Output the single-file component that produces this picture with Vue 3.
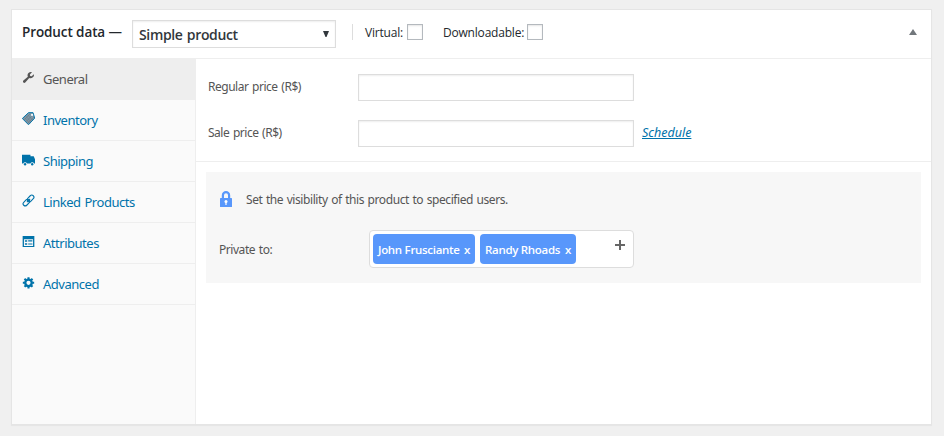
<script setup>
import { ref } from 'vue'

const active = ref('general')
const tabs = [
  { id: 'general', label: 'General' },
  { id: 'inventory', label: 'Inventory' },
  { id: 'shipping', label: 'Shipping' },
  { id: 'linked', label: 'Linked Products' },
  { id: 'attributes', label: 'Attributes' },
  { id: 'advanced', label: 'Advanced' },
]
const users = ref(['John Frusciante', 'Randy Rhoads'])
const remove = (name) => { users.value = users.value.filter((u) => u !== name) }
</script>

<template>
  <div class="page">
    <section class="postbox">
      <header class="head">
        <span class="title">Product data —</span>
        <div class="select">
          <span class="select-text">Simple product</span>
          <svg class="caret" width="6" height="6" viewBox="0 0 6 6"><path d="M0 0h6L3.5 6h-1z" fill="#32373c" /></svg>
        </div>
        <i class="divider"></i>
        <label class="check virtual"><span>Virtual:</span><input type="checkbox" /></label>
        <label class="check download"><span>Downloadable:</span><input type="checkbox" /></label>
        <svg class="toggle" width="8" height="6" viewBox="0 0 8 6"><path d="M4 0l4 6H0z" fill="#72777c" /></svg>
      </header>

      <div class="body">
        <nav class="tabs">
          <a v-for="t in tabs" :key="t.id" :class="['tab', t.id, { active: active === t.id }]" @click="active = t.id">
            <svg class="icon" width="13" height="13" viewBox="0 0 20 20" fill="currentColor">
              <path v-if="t.id === 'general'" d="M16.7 9.8c-1.7 1.6-3.9 1.9-5.6 1L5 17.7c-.8.8-2.1.8-2.9 0-.8-.8-.8-2.1 0-2.9L9 8.8C8.1 7 8.5 4.8 10 3.2c1.5-1.5 3.6-1.9 5.3-1.2l-3.2 3.3.5 2.2 2.3.6 3.2-3.2c.8 1.7 0 3.5-1.4 4.9z" />
              <g v-else-if="t.id === 'inventory'">
                <path d="M10 1h7l2.5 8.5L10 19.500 .5 10z" fill="#7d99aa" stroke="currentColor" stroke-width="1.5" />
                <path d="M5.500 6l8.500 9M8 4l8.500 8.500M3.500 8.500l8.500 9M3.500 12L13 2.500M6 15l10-10M8.500 17.500L18.500 7.500" fill="none" stroke="#666f78" stroke-width=".7" />
                <circle cx="15.5" cy="4.5" r="1.7" fill="#fafafa" />
              </g>
              <g v-else-if="t.id === 'shipping'">
                <path d="M0 2.500h13v2.500h5l2 4.500V16h-1.500a3 3 0 0 0-5.500 0H7.500A3 3 0 0 0 2 16H0z" />
                <circle cx="4.700" cy="17.300" r="1.800" /><circle cx="15.700" cy="17.300" r="1.800" />
              </g>
              <g v-else-if="t.id === 'linked'" fill="none" stroke="currentColor" stroke-width="1.7">
                <rect x="7.500" y="3.500" width="11.500" height="6.500" rx="3.250" transform="rotate(-45 13.250 6.750)" />
                <rect x="1" y="10" width="11.500" height="6.500" rx="3.250" transform="rotate(-45 6.750 13.250)" />
                <path d="M7.500 12.500l5-5" />
              </g>
              <path v-else-if="t.id === 'attributes'" fill-rule="evenodd" d="M1 1.500h18v17H1zM3 6.500v10.300h14V6.500zM4.500 8h3.500v2.500H4.500zM9.500 8.200h6.500V10H9.500zM4.500 12.500H8V15H4.500zM9.500 13h6.500v1.800H9.500z" />
              <g v-else fill="none" stroke="currentColor">
                <circle cx="10" cy="10.500" r="5" stroke-width="3.600" />
                <path d="M10 1.800v3M10 16.200v3M1.300 10.500h3M15.700 10.500h3M3.850 4.350L6 6.500M14 14.500l2.150 2.150M3.850 16.650L6 14.500M14 6.500l2.150-2.150" stroke-width="3.200" />
              </g>
            </svg>
            <span class="tab-label">{{ t.label }}</span>
          </a>
        </nav>

        <main class="panel">
          <div class="prices">
            <div class="field">
              <label class="regular">Regular price (R$)</label><input type="text" />
            </div>
            <div class="field">
              <label class="sale">Sale price (R$)</label><input type="text" />
              <a class="schedule">Schedule</a>
            </div>
          </div>
          <div class="privacy">
            <div class="notice">
              <svg width="12" height="16" viewBox="0 0 12 16">
                <path d="M2.900 8V4.200a3.100 3.100 0 0 1 6.200 0V8" fill="none" stroke="#5897fb" stroke-width="2.200" />
                <rect y="7" width="12" height="9" rx=".6" fill="#5897fb" />
                <circle cx="6" cy="10.500" r="1.500" fill="#fff" /><path d="M5.400 11h1.200v3H5.400z" fill="#fff" />
              </svg>
              <span>Set the visibility of this product to specified users.</span>
            </div>
            <div class="private">
              <span class="private-label">Private to:</span>
              <div class="tokens">
                <span v-for="(u, i) in users" :key="u" :class="['token', i ? 'second' : 'first']">
                  <span class="name">{{ u }}</span><span class="x" @click="remove(u)">x</span>
                </span>
                <svg class="plus" width="10" height="10" viewBox="0 0 10 10"><path d="M4 0h2v4h4v2H6v4H4V6H0V4h4z" fill="#666" /></svg>
              </div>
            </div>
          </div>
        </main>
      </div>
    </section>
  </div>
</template>

<style>
body { background: #f0f0f0; }
</style>

<style scoped>
.page {
  box-sizing: border-box;
  height: 436px;
  padding: 9px 12px 11px 11px;
  background: #f0f0f0;
  font-family: "Noto Sans", "Open Sans", sans-serif;
  font-size: 12px;
  color: #555;
  white-space: nowrap;
}
.postbox {
  box-sizing: border-box;
  height: 416px;
  border: 1px solid #e5e5e5;
  box-shadow: 0 1px 1px rgba(0, 0, 0, .04);
  background: #fff;
  display: flex;
  flex-direction: column;
}
.head {
  box-sizing: border-box;
  height: 49px;
  flex: none;
  display: flex;
  align-items: flex-start;
  border-bottom: 1px solid #eee;
  padding: 10px 14px 0 10px;
  color: #23282d;
}
.title { width: 110px; font-family: "Open Sans", sans-serif; font-size: 13.5px; font-weight: 600; line-height: 25px; letter-spacing: -.1px; }
.select {
  box-sizing: border-box;
  width: 204px;
  height: 28px;
  border: 1px solid #ddd;
  box-shadow: inset 0 1px 2px rgba(0, 0, 0, .07);
  display: flex;
  align-items: center;
  justify-content: space-between;
  padding: 0 6px;
  color: #32373c;
}
.select-text { font-family: "Open Sans", sans-serif; font-size: 14px; font-weight: 600; letter-spacing: -.35px; word-spacing: 1px; }
.divider { width: 1px; height: 16px; margin: 4px 12px 0 16px; background: #ddd; }
.check { display: flex; line-height: 25px; font-family: "Open Sans", sans-serif; font-weight: 500; letter-spacing: -.2px; }
.virtual { width: 78px; }
.check span { flex: none; }
.virtual span { width: 42px; }
.download span { width: 84px; }
.check input {
  appearance: none;
  box-sizing: border-box;
  flex: none;
  width: 16px;
  height: 16px;
  margin: 4px 0 0;
  border: 1px solid #b4b9be;
  box-shadow: inset 0 1px 2px rgba(0, 0, 0, .1);
  background: #fff;
}
.toggle { margin: 9px 0 0 auto; }
.body { flex: 1; display: flex; }
.tabs {
  box-sizing: border-box;
  width: 184px;
  border-right: 1px solid #eee;
  background: #fafafa;
}
.tab {
  box-sizing: border-box;
  height: 41px;
  display: flex;
  align-items: flex-start;
  gap: 8px;
  padding: 12px 0 0 10px;
  border-bottom: 1px solid #eee;
  color: #0073aa;
  cursor: pointer;
}
.tab.active { background: #eee; color: #555; }
.tab-label { font-size: 13px; line-height: 16px; letter-spacing: -.48px; word-spacing: 1px; }
.panel { flex: 1; }
.prices {
  box-sizing: border-box;
  height: 103px;
  padding: 15px 0 0 12px;
  border-bottom: 1px solid #eee;
}
.field { display: flex; height: 46px; line-height: 25px; }
.field label { width: 150px; letter-spacing: -.48px; word-spacing: 1px; }
.field input {
  box-sizing: border-box;
  width: 276px;
  height: 27px;
  border: 1px solid #ddd;
  box-shadow: inset 0 1px 2px rgba(0, 0, 0, .07);
  background: #fff;
}
.schedule { margin-left: 8px; height: 27px; font-size: 12.5px; font-style: italic; text-decoration: underline; color: #0073aa; }
.privacy {
  box-sizing: border-box;
  height: 111px;
  margin: 10px 10px 0;
  padding: 19px 13px 0;
  background: #f7f7f7;
}
.notice { display: flex; align-items: flex-start; gap: 14px; height: 39px; padding-left: 1px; line-height: 18px; letter-spacing: -.42px; word-spacing: .8px; }
.private { display: flex; align-items: center; }
.private-label { width: 150px; letter-spacing: -.45px; word-spacing: 1px; }
.tokens {
  box-sizing: border-box;
  width: 265px;
  height: 38px;
  display: flex;
  gap: 5px;
  padding: 3px;
  border: 1px solid #ddd;
  border-radius: 4px;
  background: #fff;
}
.token {
  box-sizing: border-box;
  height: 30px;
  display: flex;
  justify-content: space-between;
  padding: 0 5px;
  border-radius: 4px;
  line-height: 32px;
  color: #fff;
  background: #5897fb;
  font-family: "Open Sans", sans-serif;
  font-size: 11.5px;
  font-weight: 600;
  letter-spacing: -.3px;
}
.first { width: 102px; }
.second { width: 96px; }
.plus { margin: 6px 5px 0 auto; }
</style>
